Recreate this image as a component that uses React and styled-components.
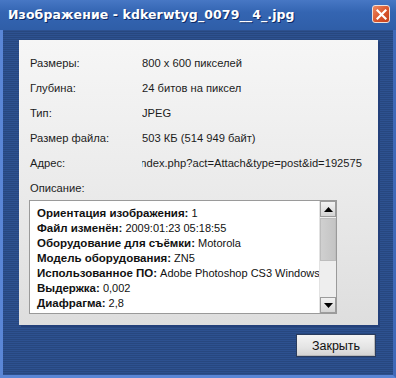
import React from "react";
import styled, { createGlobalStyle } from "styled-components";

const Global = createGlobalStyle`
  html, body { margin: 0; padding: 0; overflow: hidden; background: #2b4d8a; }
  * { box-sizing: border-box; }
`;

const Window = styled.div`
  width: 396px;
  height: 378px;
  display: flex;
  flex-direction: column;
  background: repeating-linear-gradient(to bottom, #2d5190 0px, #2d5190 1px, #27477f 1px, #27477f 2px);
  border-left: 3px solid #5a86d6;
  border-right: 3px solid #3f69b8;
  border-bottom: 3px solid #5a86d6;
  font-family: "Liberation Sans", Arial, sans-serif;
`;

const TitleBar = styled.div`
  height: 30px;
  flex: none;
  display: flex;
  align-items: center;
  justify-content: space-between;
  background: linear-gradient(to bottom, #4777c4 0%, #3465b2 40%, #2f5ea8 100%);
  margin: 0 -3px 0 -3px;
  padding-left: 8px;
  padding-right: 6px;
`;

const Title = styled.div`
  color: #fff;
  font-family: "DejaVu Sans", Verdana, sans-serif;
  font-weight: bold;
  font-size: 12.5px;
  text-shadow: 1px 1px 0 #0c2a66;
  letter-spacing: 0.1px;
  margin-top: -2px;
`;

const CloseBtn = styled.div`
  width: 18px;
  height: 18px;
  border: 1px solid #f2e0d8;
  border-radius: 3px;
  background: linear-gradient(135deg, #ee8a62 0%, #d9542c 55%, #c3401c 100%);
  display: flex;
  align-items: center;
  justify-content: center;
  margin-top: -2px;
`;

const Body = styled.div`
  flex: 1;
  display: flex;
  flex-direction: column;
  padding: 10px 15px 0 16px;
`;

const Panel = styled.div`
  height: 285px;
  background: linear-gradient(to bottom, #f6f6f6 0%, #ebebeb 50%, #dedede 100%);
  box-shadow: 2px 2px 0 #23407a;
  padding: 10px 12px 0 10px;
  display: flex;
  flex-direction: column;
`;

const Row = styled.div`
  height: 25px;
  display: grid;
  grid-template-columns: 112px 1fr;
  align-items: center;
  font-size: 11.2px;
  color: #1c1c1c;
  padding-left: 1px;
`;

const Value = styled.div`
  display: flex;
  justify-content: ${(p) => (p.$clip ? "flex-end" : "flex-start")};
  overflow: hidden;
  white-space: nowrap;
  padding-right: ${(p) => (p.$clip ? "4px" : "0")};
`;

const DescBox = styled.div`
  width: 308px;
  height: 114px;
  background: #fff;
  border: 1px solid #9a9a9a;
  display: flex;
`;

const DescText = styled.div`
  flex: 1;
  padding: 5px 0 0 7px;
  font-size: 11px;
  color: #111;
  white-space: nowrap;
  overflow: hidden;
`;

const Line = styled.div`
  height: 15px;
  line-height: 15px;
`;

const B = styled.b`
  font-weight: bold;
  font-size: 11.5px;
  line-height: 15px;
`;

const ScrollBar = styled.div`
  width: 17px;
  flex: none;
  display: flex;
  flex-direction: column;
  background: #eeeeee;
  border-left: 1px solid #e2e2e2;
`;

const ArrowBtn = styled.div`
  height: 16px;
  flex: none;
  background: linear-gradient(to bottom, #f2f2f2, #d4d4d4);
  border: 1px solid #9c9c9c;
  display: flex;
  align-items: center;
  justify-content: center;
`;

const Track = styled.div`
  flex: 1;
  display: flex;
  flex-direction: column;
  padding: 1px 0;
`;

const Thumb = styled.div`
  height: 43px;
  background: linear-gradient(to right, #d0d0d0, #c4c4c4);
  border: 1px solid #bdbdbd;
`;

const Footer = styled.div`
  display: flex;
  justify-content: flex-end;
  padding: 9px 0 0 0;
`;

const Button = styled.div`
  width: 80px;
  height: 23px;
  background: linear-gradient(to bottom, #f4f4f4 0%, #e4e4e4 60%, #d2d2d2 100%);
  border: 1px solid #2a3c5e;
  box-shadow: inset -1px -1px 0 #b8b8b8;
  display: flex;
  align-items: center;
  justify-content: center;
  font-size: 12.5px;
  color: #111;
  margin-right: 2px;
`;

const Tri = ({ up }) => (
  <svg width="9" height="5" viewBox="0 0 9 5">
    {up ? <polygon points="0,5 9,5 4.5,0" fill="#000" /> : <polygon points="0,0 9,0 4.5,5" fill="#000" />}
  </svg>
);

const rows = [
  ["Размеры:", "800 x 600 пикселей"],
  ["Глубина:", "24 битов на пиксел"],
  ["Тип:", "JPEG"],
  ["Размер файла:", "503 КБ (514 949 байт)"],
];

const desc = [
  ["Ориентация изображения:", "1"],
  ["Файл изменён:", "2009:01:23 05:18:55"],
  ["Оборудование для съёмки:", "Motorola"],
  ["Модель оборудования:", "ZN5"],
  ["Использованное ПО:", "Adobe Photoshop CS3 Windows"],
  ["Выдержка:", "0,002"],
  ["Диафрагма:", "2,8"],
];

export default function App() {
  return (
    <>
      <Global />
      <Window>
        <TitleBar>
          <Title>Изображение - kdkerwtyg_0079__4_.jpg</Title>
          <CloseBtn>
            <svg width="11" height="11" viewBox="0 0 11 11">
              <path d="M1.5 1.5 L9.5 9.5 M9.5 1.5 L1.5 9.5" stroke="#fff" strokeWidth="2.2" strokeLinecap="square" />
            </svg>
          </CloseBtn>
        </TitleBar>
        <Body>
          <Panel>
            {rows.map(([l, v]) => (
              <Row key={l}>
                <span>{l}</span>
                <Value>{v}</Value>
              </Row>
            ))}
            <Row>
              <span>Адрес:</span>
              <Value $clip>
                <span>index.php?act=Attach&amp;type=post&amp;id=192575</span>
              </Value>
            </Row>
            <Row>
              <span>Описание:</span>
            </Row>
            <DescBox>
              <DescText>
                {desc.map(([l, v]) => (
                  <Line key={l}>
                    <B>{l}</B> {v}
                  </Line>
                ))}
              </DescText>
              <ScrollBar>
                <ArrowBtn><Tri up /></ArrowBtn>
                <Track><Thumb /></Track>
                <ArrowBtn><Tri /></ArrowBtn>
              </ScrollBar>
            </DescBox>
          </Panel>
          <Footer>
            <Button>Закрыть</Button>
          </Footer>
        </Body>
      </Window>
    </>
  );
}
